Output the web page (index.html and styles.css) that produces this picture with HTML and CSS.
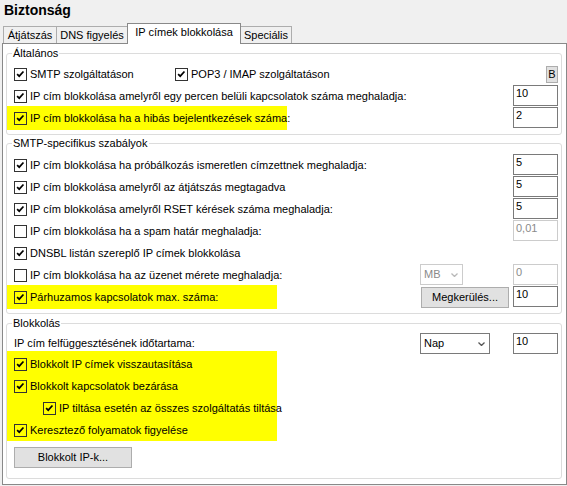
FILE: index.html
```html
<!DOCTYPE html>
<html lang="hu">
<head>
<meta charset="utf-8">
<title>Biztonság</title>
<link rel="stylesheet" href="styles.css">
</head>
<body>
<h1 class="title">Biztonság</h1>
<div class="tabs">
  <div class="tab tab-relay">Átjátszás</div>
  <div class="tab tab-dns">DNS figyelés</div>
  <div class="tab tab-ip active">IP címek blokkolása</div>
  <div class="tab tab-special">Speciális</div>
</div>
<div class="panel">
  <fieldset class="group g1">
    <legend>Általános</legend>
    <div class="row">
      <div class="opt pair">
        <label class="check first"><span class="cb on"><svg viewBox="0 0 13 13"><path d="M2.5 6 L5 8.5 L10 3"/></svg></span>SMTP szolgáltatáson</label>
        <label class="check"><span class="cb on"><svg viewBox="0 0 13 13"><path d="M2.5 6 L5 8.5 L10 3"/></svg></span>POP3 / IMAP szolgáltatáson</label>
      </div>
      <span class="btn btn-b">B</span>
    </div>
    <div class="row">
      <label class="opt check"><span class="cb on"><svg viewBox="0 0 13 13"><path d="M2.5 6 L5 8.5 L10 3"/></svg></span>IP cím blokkolása amelyről egy percen belüli kapcsolatok száma meghaladja:</label>
      <span class="field">10</span>
    </div>
    <div class="row">
      <label class="opt check hl hl-wide"><span class="cb on"><svg viewBox="0 0 13 13"><path d="M2.5 6 L5 8.5 L10 3"/></svg></span>IP cím blokkolása ha a hibás bejelentkezések száma:</label>
      <span class="field">2</span>
    </div>
  </fieldset>

  <fieldset class="group g2">
    <legend>SMTP-specifikus szabályok</legend>
    <div class="row">
      <label class="opt check"><span class="cb on"><svg viewBox="0 0 13 13"><path d="M2.5 6 L5 8.5 L10 3"/></svg></span>IP cím blokkolása ha próbálkozás ismeretlen címzettnek meghaladja:</label>
      <span class="field">5</span>
    </div>
    <div class="row">
      <label class="opt check"><span class="cb on"><svg viewBox="0 0 13 13"><path d="M2.5 6 L5 8.5 L10 3"/></svg></span>IP cím blokkolása amelyről az átjátszás megtagadva</label>
      <span class="field">5</span>
    </div>
    <div class="row">
      <label class="opt check"><span class="cb on"><svg viewBox="0 0 13 13"><path d="M2.5 6 L5 8.5 L10 3"/></svg></span>IP cím blokkolása amelyről RSET kérések száma meghaladja:</label>
      <span class="field">5</span>
    </div>
    <div class="row">
      <label class="opt check"><span class="cb"></span>IP cím blokkolása ha a spam határ meghaladja:</label>
      <span class="field disabled">0,01</span>
    </div>
    <div class="row">
      <label class="opt check"><span class="cb on"><svg viewBox="0 0 13 13"><path d="M2.5 6 L5 8.5 L10 3"/></svg></span>DNSBL listán szereplő IP címek blokkolása</label>
    </div>
    <div class="row">
      <label class="opt check"><span class="cb"></span>IP cím blokkolása ha az üzenet mérete meghaladja:</label>
      <span class="select select-mb disabled">MB<svg class="chev" viewBox="0 0 7 4"><path d="M0.5 0.5 L3.5 3.5 L6.5 0.5"/></svg></span>
      <span class="field disabled">0</span>
    </div>
    <div class="row">
      <label class="opt check hl hl-narrow"><span class="cb on"><svg viewBox="0 0 13 13"><path d="M2.5 6 L5 8.5 L10 3"/></svg></span>Párhuzamos kapcsolatok max. száma:</label>
      <span class="btn btn-bypass">Megkerülés...</span>
      <span class="field">10</span>
    </div>
  </fieldset>

  <fieldset class="group g3">
    <legend>Blokkolás</legend>
    <div class="row row-first">
      <span class="opt">IP cím felfüggesztésének időtartama:</span>
      <span class="select select-nap">Nap<svg class="chev" viewBox="0 0 7 4"><path d="M0.5 0.5 L3.5 3.5 L6.5 0.5"/></svg></span>
      <span class="field">10</span>
    </div>
    <div class="hl-block">
      <label class="line check"><span class="cb on"><svg viewBox="0 0 13 13"><path d="M2.5 6 L5 8.5 L10 3"/></svg></span>Blokkolt IP címek visszautasítása</label>
      <label class="line check"><span class="cb on"><svg viewBox="0 0 13 13"><path d="M2.5 6 L5 8.5 L10 3"/></svg></span>Blokkolt kapcsolatok bezárása</label>
      <label class="line check indent"><span class="cb on"><svg viewBox="0 0 13 13"><path d="M2.5 6 L5 8.5 L10 3"/></svg></span>IP tiltása esetén az összes szolgáltatás tiltása</label>
      <label class="line check"><span class="cb on"><svg viewBox="0 0 13 13"><path d="M2.5 6 L5 8.5 L10 3"/></svg></span>Keresztező folyamatok figyelése</label>
    </div>
    <span class="btn btn-blocked">Blokkolt IP-k...</span>
  </fieldset>
</div>
</body>
</html>
```

FILE: styles.css
```css
* { box-sizing: border-box; }
html, body { margin: 0; padding: 0; }
body {
  width: 567px;
  height: 486px;
  overflow: hidden;
  background: #f0f0f0;
  font-family: "Liberation Sans", Arial, sans-serif;
  font-size: 11px;
  line-height: 13px;
  color: #000;
}
.title {
  margin: 0;
  height: 23px;
  padding: 2px 0 0 4px;
  font-size: 14px;
  line-height: 16px;
  font-weight: bold;
}
.tabs {
  display: flex;
  align-items: flex-end;
  height: 20px;
  padding-left: 3px;
}
.tab {
  height: 17px;
  border: 1px solid #adadad;
  border-bottom: none;
  margin-right: -1px;
  padding-top: 2px;
  line-height: 12px;
  text-align: center;
  white-space: nowrap;
  background: #f0f0f0;
}
.tab.active {
  height: 21px;
  margin-bottom: -1px;
  background: #fff;
  border-color: #898989;
  position: relative;
  z-index: 1;
}
.tab-relay { width: 54px; }
.tab-dns { width: 72px; }
.tab-ip { width: 114px; }
.tab-special { width: 52px; }

.panel {
  margin-left: 2px;
  width: 565px;
  height: 442px;
  border: 1px solid #898989;
  background: #fff;
  padding: 3px 4px 0 3px;
}
.group {
  margin: 0;
  min-width: 0;
  border: 1px solid #dcdcdc;
  border-radius: 3px;
  padding: 3px 3px 5px 7px;
}
.group legend {
  padding: 0 1px;
  margin-left: -2px;
  line-height: 13px;
}
.g2 { margin-top: 2px; padding-top: 4px; }
.g3 { margin-top: 3px; padding-top: 3px; padding-bottom: 10px; }

.row {
  display: grid;
  grid-template-columns: 1fr 89px 45px;
  column-gap: 4px;
  height: 22px;
  align-items: center;
}
.opt { grid-column: 1; }
.check {
  display: flex;
  align-items: center;
  white-space: nowrap;
}
.pair { display: flex; align-items: center; }
.pair .first { width: 161px; }
.cb {
  flex: none;
  width: 13px;
  height: 13px;
  border: 1px solid #333;
  background: #fff;
  margin-right: 3px;
  display: flex;
}
.cb svg { width: 11px; height: 11px; }
.cb path {
  fill: none;
  stroke: #000;
  stroke-width: 2;
}
.hl {
  background: #ffff00;
  margin: -1px 0 -1px -7px;
  padding-left: 7px;
  height: 24px;
  justify-self: start;
}
.hl .cb, .hl-block .cb { background: transparent; }
.hl-wide { width: 280px; }
.hl-narrow { width: 270px; }

.field {
  grid-column: 3;
  align-self: start;
  height: 21px;
  border: 1px solid #7a7a7a;
  background: #fff;
  padding: 1px 0 0 2px;
  line-height: 13px;
}
.field.disabled {
  border-color: #cccccc;
  color: #8a8a8a;
}
.btn {
  display: flex;
  align-items: center;
  justify-content: center;
  background: #e1e1e1;
  border: 1px solid #adadad;
  white-space: nowrap;
}
.btn-b {
  grid-column: 3;
  justify-self: end;
  width: 12px;
  height: 17px;
}
.btn-bypass {
  grid-column: 2;
  height: 21px;
  margin-left: 1px;
}
.btn-blocked {
  width: 118px;
  height: 21px;
  margin-top: 6px;
}
.select {
  grid-column: 2;
  justify-self: start;
  align-self: start;
  height: 21px;
  border: 1px solid #7a7a7a;
  background: #fff;
  display: flex;
  align-items: center;
  justify-content: space-between;
  padding: 0 4px 0 3px;
}
.select-nap { width: 70px; }
.select-mb { width: 43px; }
.select.disabled { border-color: #cccccc; color: #8a8a8a; }
.chev { width: 7px; height: 4px; }
.chev path { fill: none; stroke: #555; stroke-width: 1.3; }
.select.disabled .chev path { stroke: #b8b8b8; }

.row-first { height: 21px; }
.hl-block {
  width: 270px;
  margin: -3px 0 0 -7px;
  padding: 2px 0 0 7px;
  background: #ffff00;
}
.line { height: 22px; }
.indent { padding-left: 29px; }
```
